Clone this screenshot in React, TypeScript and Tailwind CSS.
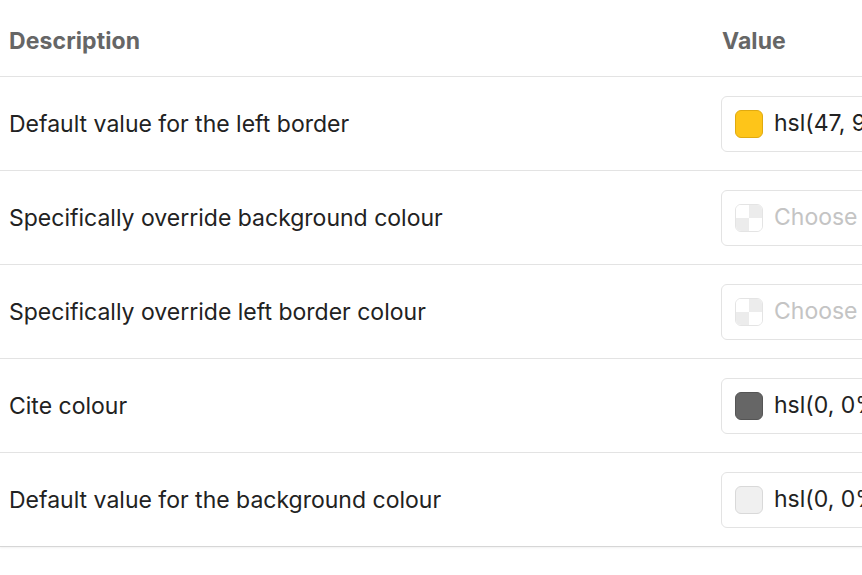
import React from "react"

type Row = {
  label: string
  swatch: "color" | "empty"
  color?: string
  border?: string
  value?: string
}

const rows: Row[] = [
  { label: "Default value for the left border", swatch: "color", color: "#fec519", border: "#e0aa10", value: "hsl(47, 96%, 54%)" },
  { label: "Specifically override background colour", swatch: "empty" },
  { label: "Specifically override left border colour", swatch: "empty" },
  { label: "Cite colour", swatch: "color", color: "#666666", border: "#555555", value: "hsl(0, 0%, 40%)" },
  { label: "Default value for the background colour", swatch: "color", color: "#f0f0f0", border: "#d9d9d9", value: "hsl(0, 0%, 94%)" },
]

function Swatch({ row }: { row: Row }) {
  if (row.swatch === "empty") {
    return (
      <div className="grid h-[28px] w-[28px] shrink-0 grid-cols-2 grid-rows-2 overflow-hidden rounded-[6px] border border-[#e4e4e4]">
        <div className="bg-white" />
        <div className="bg-[#ececec]" />
        <div className="bg-[#ececec]" />
        <div className="bg-white" />
      </div>
    )
  }
  return (
    <div
      className="h-[28px] w-[28px] shrink-0 rounded-[6px] border"
      style={{ backgroundColor: row.color, borderColor: row.border }}
    />
  )
}

export default function App() {
  return (
    <div className="h-[575px] w-[862px] overflow-hidden bg-white font-['Inter',sans-serif]">
      <div className="w-[1100px] border-b border-[#d6d6d6] shadow-[0_1px_2px_rgba(0,0,0,0.06)]">
        <div className="grid h-[77px] grid-cols-[721px_1fr] items-center border-b border-[#e3e3e3] pt-[7px] text-[23px] font-bold tracking-[0.1px] text-[#666]">
          <div className="pl-[9px]">Description</div>
          <div className="pl-[1px]">Value</div>
        </div>
        {rows.map((row, i) => (
          <div
            key={row.label}
            className={
              i < rows.length - 1
                ? "grid h-[94px] grid-cols-[721px_1fr] items-center border-b border-[#e3e3e3] text-[23px] text-[#222]"
                : "grid h-[93px] grid-cols-[721px_1fr] items-center text-[23px] text-[#222]"
            }
          >
            <div className="pl-[9px] pt-[2px]">{row.label}</div>
            <div>
              <div className="flex h-[56px] w-[280px] items-center gap-[11px] rounded-[6px] border border-[#e3e3e3] bg-white pl-[13px]">
                <Swatch row={row} />
                {row.value ? (
                  <span className="text-[#222]">{row.value}</span>
                ) : (
                  <span className="text-[#c4c4c4]">Choose colour</span>
                )}
              </div>
            </div>
          </div>
        ))}
      </div>
    </div>
  )
}
